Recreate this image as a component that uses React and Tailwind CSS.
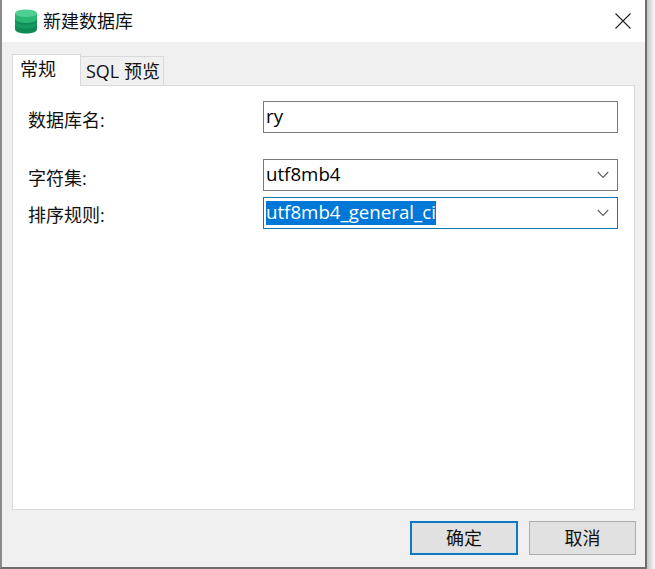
import React from "react";

const FONT = "font-['Open_Sans','Noto_Sans_CJK_SC',sans-serif]";

function Chevron() {
  return (
    <svg width="12" height="8" viewBox="0 0 12 8" className="shrink-0">
      <path d="M0.8 1 L6 6.4 L11.2 1" fill="none" stroke="#5f5f5f" strokeWidth="1.1" />
    </svg>
  );
}

function DbIcon() {
  return (
    <svg width="22" height="25" viewBox="0 0 22 25">
      <path d="M0 4 V20 C0 23 5 24.500 11 24.500 C17 24.500 22 23 22 20 V4 Z" fill="#0f8a55" />
      <path d="M0 4 V9.500 C0 12.500 5 14 11 14 C17 14 22 12.500 22 9.500 V4 Z" fill="#2bb673" />
      <path d="M0 12 V15 C0 18 5 19.500 11 19.500 C17 19.500 22 18 22 15 V12 C20 15 16 15.500 11 15.500 C6 15.500 2 15 0 12 Z" fill="#169a60" />
      <ellipse cx="11" cy="4.200" rx="11" ry="3.800" fill="#4fcf92" />
    </svg>
  );
}

function Row({ label, children, className = "", labelClass = "pt-[5px]" }) {
  return (
    <div className={`flex items-center ${className}`}>
      <div className={`w-[238px] pl-[3px] text-[18px] leading-6 text-[#111] ${labelClass}`}>{label}</div>
      {children}
    </div>
  );
}

export default function App() {
  return (
    <div className={`flex h-[569px] w-[655px] overflow-hidden bg-white ${FONT}`}>
      <div className="flex h-[569px] w-[647px] shrink-0 flex-col border-b-2 border-l-2 border-r-2 border-b-[#6e6e6e] border-l-[#8a8a8a] border-r-[#6e6e6e] bg-[#f0f0f0]">
        <div className="flex h-[42px] shrink-0 items-center bg-white pl-[13px] pr-[14px]">
          <DbIcon />
          <span className="ml-[6px] text-[18px] leading-5 text-[#111]">新建数据库</span>
          <svg width="16" height="16" viewBox="0 0 16 16" className="ml-auto">
            <path d="M0.500 0.500 L15.500 15.500 M15.500 0.500 L0.500 15.500" stroke="#222" strokeWidth="1.100" fill="none" />
          </svg>
        </div>

        <div className="flex flex-1 flex-col pl-[10px] pr-[10px] pt-[12px]">
          <div className="relative z-10 flex h-[32px] shrink-0 items-end">
            <div className="flex h-[32px] w-[69px] items-center border-l border-r border-t border-[#d9d9d9] bg-white pb-[2px] pl-[7px] text-[18px] text-[#111]">
              常规
            </div>
            <div className="flex h-[30px] w-[83px] items-center border-r border-t border-b border-[#d9d9d9] bg-[#f0f0f0] pl-[5px] text-[18px] text-[#111]">
              SQL 预览
            </div>
          </div>
          <div className="-mt-px flex h-[425px] shrink-0 flex-col border border-[#d9d9d9] bg-white pl-[12px] pr-[16px] pt-[15px]">
            <Row label="数据库名:">
              <div className="flex h-[32px] flex-1 items-center border border-[#7a7a7a] bg-white px-[2px] pb-[2px] text-[18.700px] text-black">
                ry
              </div>
            </Row>
            <Row label="字符集:" className="mt-[26px]">
              <div className="flex h-[32px] flex-1 items-center justify-between border border-[#7a7a7a] bg-white pb-[1px] pl-[2px] pr-[8px] text-[18.700px] text-black">
                <span>utf8mb4</span>
                <Chevron />
              </div>
            </Row>
            <Row label="排序规则:" className="mt-[6px]" labelClass="pt-[4px]">
              <div className="flex h-[32px] flex-1 items-center justify-between border border-[#0f78b4] bg-white pl-[2px] pr-[8px] text-[18.700px]">
                <span className="flex h-[24px] items-center bg-[#0078d7] pb-[1px] text-white">utf8mb4_general_ci</span>
                <Chevron />
              </div>
            </Row>
          </div>
          <div className="mt-[11px] flex justify-end gap-[11px]">
            <div className="flex h-[34px] w-[108px] items-center justify-center border-2 border-[#0f78c4] bg-[#e1e1e1] text-[18px] text-[#111]">
              确定
            </div>
            <div className="-mr-px flex h-[34px] w-[107px] items-center justify-center border border-[#adadad] bg-[#e1e1e1] text-[18px] text-[#111]">
              取消
            </div>
          </div>
        </div>
      </div>
      <div className="h-full flex-1 bg-gradient-to-r from-[#c4c4c4] to-[#fafafa]" />
    </div>
  );
}
